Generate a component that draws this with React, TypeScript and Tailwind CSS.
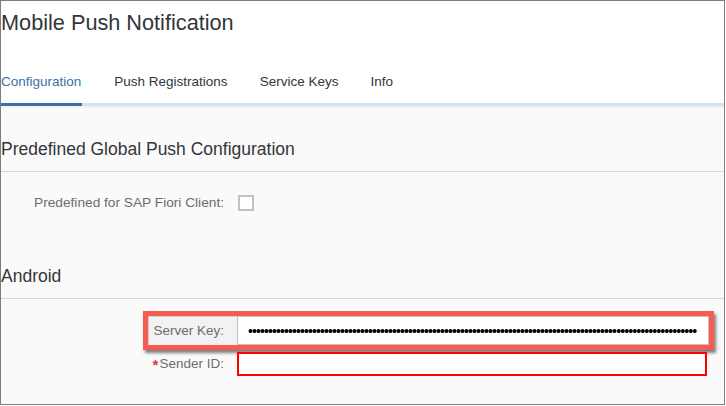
import React from "react";

const tabs = ["Configuration", "Push Registrations", "Service Keys", "Info"];

function SectionTitle({ children, top }: { children: React.ReactNode; top: string }) {
  return (
    <div className={`${top} pb-[10px] border-b border-[#d9d9d9]`}>
      <h2 className="text-[17.5px] leading-[24px] text-[#32363a]">{children}</h2>
    </div>
  );
}

export default function App() {
  const dots = "•".repeat(112);

  return (
    <div
      className="w-[725px] h-[405px] border border-[#7d7d7d] overflow-hidden bg-[#fafafa]"
      style={{ fontFamily: '"Liberation Sans", Arial, sans-serif' }}
    >
      {/* Header */}
      <div className="bg-white">
        <div className="h-[43px] flex items-center">
          <h1 className="text-[21.7px] text-[#32363a] leading-none">Mobile Push Notification</h1>
        </div>
        <div className="mt-[17px] flex gap-8 h-[45px] border-b-[3px] border-[#d4e2f0]">
          {tabs.map((t, i) => (
            <div
              key={t}
              className={
                i === 0
                  ? "h-[45px] flex items-center text-[13.5px] text-[#3a71a8] border-b-[3px] border-[#3a71a8] pr-[1px]"
                  : "h-[42px] flex items-center text-[13.5px] text-[#32363a]"
              }
            >
              {t}
            </div>
          ))}
        </div>
      </div>

      {/* Content */}
      <div className="border-t-2 border-[#eef3f8]">
        <SectionTitle top="pt-[29px]">Predefined Global Push Configuration</SectionTitle>

        <div className="mt-[20px] h-[22px] flex items-center">
          <span className="w-[236px] text-right pr-[13px] text-[13.7px] text-[#6a6d70]">
            Predefined for SAP Fiori Client:
          </span>
          <span className="ml-[1px] w-4 h-4 border-2 border-[#c2c2c2] bg-white" />
        </div>

        <div className="mt-[50px] pb-[1px]">
          <SectionTitle top="pt-0">Android</SectionTitle>
        </div>

        {/* Server Key row (highlighted) */}
        <div className="mt-[11px] ml-[142px] w-[571px] h-[39px] border-[5px] border-[#f55d50] shadow-[2px_3px_3px_rgba(0,0,0,0.5)] bg-[#f2f2f2] flex">
          <div className="w-[89px] flex items-center justify-end pr-[13px] text-[13.5px] text-[#6a6d70] border-l border-t border-[#cfcfcf]">
            Server Key:
          </div>
          <div className="flex-1 bg-white border border-[#c2c2c2] flex items-center pl-[10px] overflow-hidden">
            <span className="text-[14px] tracking-[-0.9px] text-black leading-none whitespace-nowrap antialiased">
              {dots}
            </span>
          </div>
        </div>

        {/* Sender ID row */}
        <div className="mt-[2px] ml-[147px] flex h-[24px]">
          <div className="w-[89px] flex items-center justify-end pr-[13px] text-[13.5px] text-[#6a6d70]">
            <span className="text-[#d9363e] text-[15px] font-bold leading-none mr-[1px]">*</span>
            Sender ID:
          </div>
          <div className="w-[470px] h-[24px] border-2 border-[#ff0000] bg-white" />
        </div>
      </div>
    </div>
  );
}
